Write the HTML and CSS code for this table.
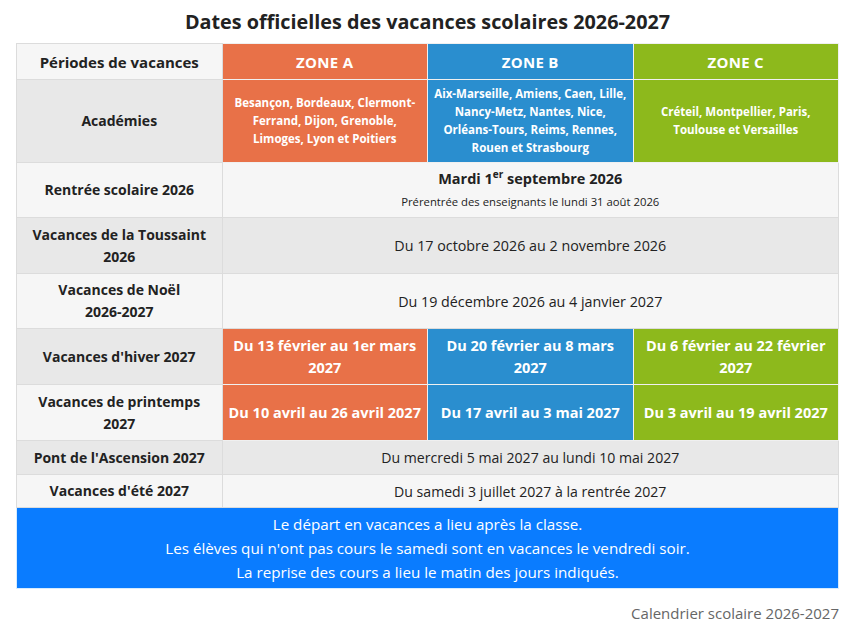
FILE: index.html
```html
<!DOCTYPE html>
<html lang="fr">
<head>
<meta charset="utf-8">
<title>Calendrier scolaire 2026-2027</title>
<link rel="stylesheet" href="styles.css">
</head>
<body>
<div class="page">
  <h1 class="title">Dates officielles des vacances scolaires 2026-2027</h1>
  <table class="cal">
    <colgroup><col class="c"><col class="c"><col class="c"><col class="c"></colgroup>
    <tr class="light h-head">
      <th class="label head">Périodes de vacances</th>
      <th class="zone za">ZONE A</th>
      <th class="zone zb">ZONE B</th>
      <th class="zone zc">ZONE C</th>
    </tr>
    <tr class="dark h-acad">
      <th class="label">Académies</th>
      <td class="acad za">Besançon, Bordeaux, Clermont-Ferrand, Dijon, Grenoble, Limoges, Lyon et Poitiers</td>
      <td class="acad zb">Aix-Marseille, Amiens, Caen, Lille, Nancy-Metz, Nantes, Nice, Orléans-Tours, Reims, Rennes, Rouen et Strasbourg</td>
      <td class="acad zc">Créteil, Montpellier, Paris, Toulouse et Versailles</td>
    </tr>
    <tr class="light h-55">
      <th class="label">Rentrée scolaire 2026</th>
      <td class="all" colspan="3">
        <div class="big">Mardi 1<sup>er</sup> septembre 2026</div>
        <div class="small">Prérentrée des enseignants le lundi 31 août 2026</div>
      </td>
    </tr>
    <tr class="dark h-56">
      <th class="label">Vacances de la Toussaint 2026</th>
      <td class="all" colspan="3">Du 17 octobre 2026 au 2 novembre 2026</td>
    </tr>
    <tr class="light h-55">
      <th class="label">Vacances de Noël<br>2026-2027</th>
      <td class="all" colspan="3">Du 19 décembre 2026 au 4 janvier 2027</td>
    </tr>
    <tr class="dark h-56">
      <th class="label">Vacances d'hiver 2027</th>
      <td class="zd za">Du 13 février au 1er mars 2027</td>
      <td class="zd zb">Du 20 février au 8 mars 2027</td>
      <td class="zd zc">Du 6 février au 22 février 2027</td>
    </tr>
    <tr class="light h-56">
      <th class="label">Vacances de printemps 2027</th>
      <td class="zd nw za">Du 10 avril au 26 avril 2027</td>
      <td class="zd nw zb">Du 17 avril au 3 mai 2027</td>
      <td class="zd nw zc">Du 3 avril au 19 avril 2027</td>
    </tr>
    <tr class="dark h-34">
      <th class="label">Pont de l'Ascension 2027</th>
      <td class="all sm" colspan="3">Du mercredi 5 mai 2027 au lundi 10 mai 2027</td>
    </tr>
    <tr class="light h-33">
      <th class="label">Vacances d'été 2027</th>
      <td class="all sm" colspan="3">Du samedi 3 juillet 2027 à la rentrée 2027</td>
    </tr>
    <tr class="h-note">
      <td class="note" colspan="4">Le départ en vacances a lieu après la classe.<br>Les élèves qui n'ont pas cours le samedi sont en vacances le vendredi soir.<br>La reprise des cours a lieu le matin des jours indiqués.</td>
    </tr>
  </table>
  <p class="caption">Calendrier scolaire 2026-2027</p>
</div>
</body>
</html>
```

FILE: styles.css
```css
html, body {
  margin: 0;
  padding: 0;
  background: #ffffff;
}

body {
  font-family: "Open Sans", "Noto Sans", sans-serif;
  color: #222;
}

.page {
  padding: 8px 16px 0 16px;
}

.title {
  margin: 0 0 8px 0;
  height: 27px;
  line-height: 27px;
  font-size: 19.8px;
  font-weight: 700;
  text-align: center;
  color: #222;
}

.cal {
  width: 823px;
  border-collapse: collapse;
  table-layout: fixed;
}

.cal .c {
  width: 25%;
}

.cal th,
.cal td {
  border: 1px solid #dcdcdc;
  text-align: center;
  vertical-align: middle;
  padding: 0 6px;
}

.light { background: #f6f6f6; }
.dark { background: #e8e8e8; }

.h-head { height: 36px; }
.h-acad { height: 83px; }
.h-55 { height: 55px; }
.h-56 { height: 56px; }
.h-34 { height: 34px; }
.h-33 { height: 33px; }
.h-note { height: 81px; }

.label {
  font-size: 14px;
  font-weight: 700;
  line-height: 22px;
  color: #222;
}

.label.head {
  font-size: 15px;
}

.zone {
  color: #fff;
  font-size: 15px;
  font-weight: 700;
  letter-spacing: 0.3px;
}

.za { background: #e87148; }
.zb { background: #2a8ecf; }
.zc { background: #8db91c; }

.cal .za,
.cal .zb,
.cal .zc {
  border-color: #f0f0f0;
}

.acad {
  color: #fff;
  font-size: 11.5px;
  font-weight: 700;
  line-height: 18px;
  padding: 0 8px;
}

.all {
  font-size: 14.3px;
  color: #222;
}

.all.sm {
  font-size: 14.1px;
}

.big {
  font-size: 14.5px;
  font-weight: 700;
  line-height: 22px;
}

.big sup {
  font-size: 10px;
  line-height: 0;
  vertical-align: 6px;
}

.small {
  font-size: 11.3px;
  line-height: 20px;
  margin-top: 2px;
}

.zd {
  color: #fff;
  font-size: 14.5px;
  font-weight: 700;
  line-height: 22px;
  padding: 0 3px;
}

.zd.nw {
  white-space: nowrap;
  padding: 0;
}

.cal .note {
  background: #0a7cff;
  border: 1px solid #d6ecff;
  color: #fff;
  font-size: 15.2px;
  line-height: 24px;
  padding: 0;
}

.caption {
  margin: 14px 0 0 0;
  text-align: right;
  font-size: 15px;
  color: #666;
}
```
